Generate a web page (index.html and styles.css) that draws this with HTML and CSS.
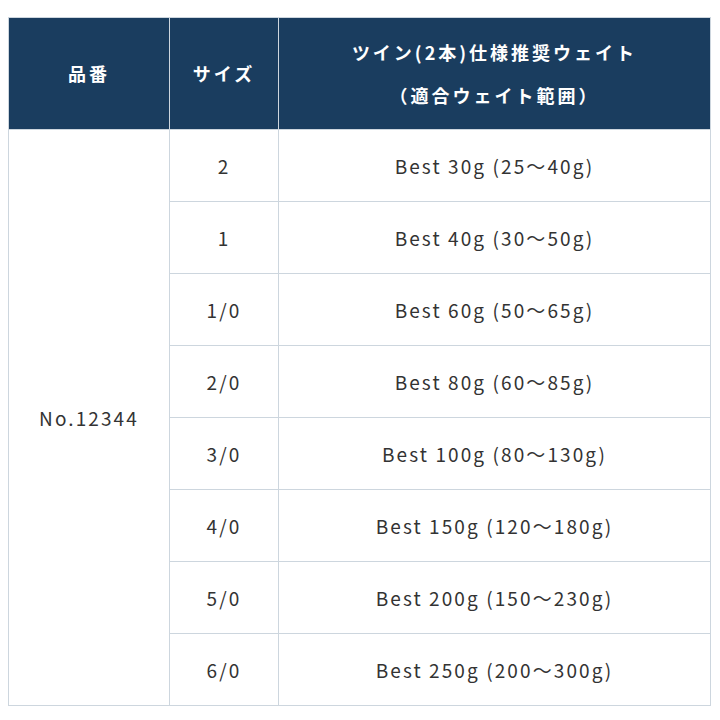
FILE: index.html
```html
<!DOCTYPE html>
<html lang="ja">
<head>
<meta charset="utf-8">
<link rel="stylesheet" href="styles.css">
</head>
<body>
<table class="spec">
  <colgroup>
    <col class="c1"><col class="c2"><col class="c3">
  </colgroup>
  <thead>
    <tr>
      <th>品番</th>
      <th>サイズ</th>
      <th>ツイン(2本)仕様推奨ウェイト<br>（適合ウェイト範囲）</th>
    </tr>
  </thead>
  <tbody>
    <tr><td rowspan="8" class="model">No.12344</td><td>2</td><td>Best 30g (25～40g)</td></tr>
    <tr><td>1</td><td>Best 40g (30～50g)</td></tr>
    <tr><td>1/0</td><td>Best 60g (50～65g)</td></tr>
    <tr><td>2/0</td><td>Best 80g (60～85g)</td></tr>
    <tr><td>3/0</td><td>Best 100g (80～130g)</td></tr>
    <tr><td>4/0</td><td>Best 150g (120～180g)</td></tr>
    <tr><td>5/0</td><td>Best 200g (150～230g)</td></tr>
    <tr><td>6/0</td><td>Best 250g (200～300g)</td></tr>
  </tbody>
</table>
</body>
</html>
```

FILE: styles.css
```css
html, body {
  margin: 0;
  padding: 0;
  background: #ffffff;
}
body {
  padding: 17px 0 0 8px;
  font-family: "Noto Sans CJK JP", "Noto Sans", sans-serif;
  color: #333333;
}
.spec {
  border-collapse: collapse;
  width: 702px;
  table-layout: fixed;
}
.c1 { width: 161px; }
.c2 { width: 109px; }
.c3 { width: 432px; }
.spec th,
.spec td {
  border: 1px solid #cdd6de;
  text-align: center;
  vertical-align: middle;
  padding: 0;
}
.spec th {
  background: #1a3d5f;
  color: #ffffff;
  font-weight: 700;
  font-size: 18px;
  line-height: 43px;
  height: 111px;
  letter-spacing: 3px;
}
.spec td {
  height: 71px;
  font-size: 19px;
  letter-spacing: 2.1px;
}
```
